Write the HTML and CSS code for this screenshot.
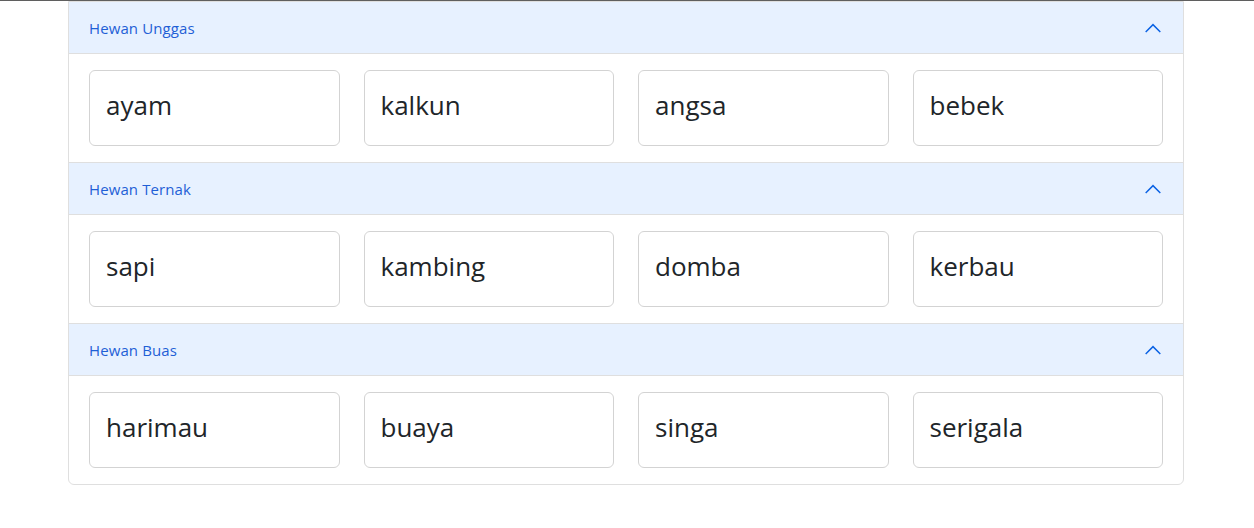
FILE: index.html
```html
<!DOCTYPE html>
<html lang="id">
<head>
<meta charset="utf-8">
<title>Hewan</title>
<link rel="stylesheet" href="styles.css">
</head>
<body>
<div class="container">
  <div class="accordion">
    <section class="item">
      <div class="header"><span>Hewan Unggas</span><svg class="chev" viewBox="0 0 16 16" width="18" height="18"><path d="M1.5 11.5 8 5l6.5 6.5" fill="none" stroke="#0c63e4" stroke-width="1.3"/></svg></div>
      <div class="body">
        <div class="card">ayam</div><div class="card">kalkun</div><div class="card">angsa</div><div class="card">bebek</div>
      </div>
    </section>
    <section class="item">
      <div class="header"><span>Hewan Ternak</span><svg class="chev" viewBox="0 0 16 16" width="18" height="18"><path d="M1.5 11.5 8 5l6.5 6.5" fill="none" stroke="#0c63e4" stroke-width="1.3"/></svg></div>
      <div class="body">
        <div class="card">sapi</div><div class="card">kambing</div><div class="card">domba</div><div class="card">kerbau</div>
      </div>
    </section>
    <section class="item">
      <div class="header"><span>Hewan Buas</span><svg class="chev" viewBox="0 0 16 16" width="18" height="18"><path d="M1.5 11.5 8 5l6.5 6.5" fill="none" stroke="#0c63e4" stroke-width="1.3"/></svg></div>
      <div class="body">
        <div class="card">harimau</div><div class="card">buaya</div><div class="card">singa</div><div class="card">serigala</div>
      </div>
    </section>
  </div>
</div>
</body>
</html>
```
FILE: styles.css
```css
html, body { margin: 0; padding: 0; }
body {
  background: #fff;
  border-top: 1px solid #5f5f5f;
  font-family: "Open Sans", "Noto Sans", sans-serif;
  color: #212529;
}
.container { width: 1116px; margin-left: 68px; }
.accordion {
  border: 1px solid #dfdfdf;
  border-radius: 0 0 6px 6px;
  overflow: hidden;
}
.item + .item { border-top: 1px solid #dfdfdf; }
.header {
  display: flex;
  align-items: center;
  justify-content: space-between;
  height: 52px;
  box-sizing: border-box;
  padding: 0 20px;
  background: #e7f1ff;
  color: #1f5fd6;
  font-size: 15px;
  letter-spacing: 0.1px;
  border-bottom: 1px solid #dfdfdf;
}
.chev { margin-right: 1px; }
.body {
  display: grid;
  grid-template-columns: repeat(4, 1fr);
  gap: 24px;
  padding: 16px 20px 16px 20px;
}
.card {
  border: 1px solid #d3d3d3;
  border-radius: 6px;
  height: 76px;
  box-sizing: border-box;
  display: flex;
  align-items: center;
  padding: 0 16px 6px;
  font-size: 26px;
}
```
